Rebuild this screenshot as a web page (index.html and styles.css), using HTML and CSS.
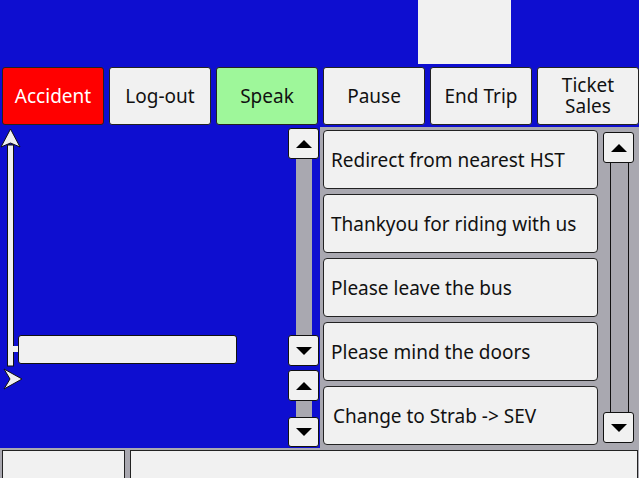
FILE: index.html
```html
<!DOCTYPE html>
<html>
<head>
<meta charset="utf-8">
<link rel="stylesheet" href="styles.css">
</head>
<body>
<div class="screen">
  <div class="top"><div class="top-box"></div></div>
  <div class="actions">
    <button class="btn btn-red">Accident</button>
    <button class="btn">Log-out</button>
    <button class="btn btn-green">Speak</button>
    <button class="btn">Pause</button>
    <button class="btn">End Trip</button>
    <button class="btn btn-two">Ticket<br>Sales</button>
  </div>
  <div class="main">
    <div class="canvas">
      <svg class="axes" width="40" height="270" viewBox="0 125 40 270">
        <rect x="7.5" y="145" width="6" height="221" fill="#f0f0f0" stroke="#111" stroke-width="1"/>
        <polygon points="10.5,129 20,147 10.5,143 1,147" fill="#f0f0f0" stroke="#111" stroke-width="1" stroke-linejoin="miter"/>
        <rect x="13" y="346" width="6" height="6" fill="#f0f0f0"/>
        <polygon points="4,369 22,379 4,389 10,379" fill="#f0f0f0" stroke="#111" stroke-width="1"/>
      </svg>
      <div class="field"></div>
    </div>
    <div class="mid">
      <div class="sbtn"><svg width="16" height="8" viewBox="0 0 16 8"><polygon points="0,8 8,0 16,8" fill="#000"/></svg></div>
      <div class="mtrack mtrack-long"></div>
      <div class="sbtn"><svg width="16" height="8" viewBox="0 0 16 8"><polygon points="0,0 16,0 8,8" fill="#000"/></svg></div>
      <div class="sbtn sbtn-gap"><svg width="16" height="8" viewBox="0 0 16 8"><polygon points="0,8 8,0 16,8" fill="#000"/></svg></div>
      <div class="mtrack mtrack-short"></div>
      <div class="sbtn sbtn-last"><svg width="16" height="8" viewBox="0 0 16 8"><polygon points="0,0 16,0 8,8" fill="#000"/></svg></div>
    </div>
    <div class="panel">
      <div class="list">
        <div class="item">Redirect from nearest HST</div>
        <div class="item">Thankyou for riding with us</div>
        <div class="item">Please leave the bus</div>
        <div class="item">Please mind the doors</div>
        <div class="item item-last">Change to Strab -&gt; SEV</div>
      </div>
      <div class="vscroll">
        <div class="sbtn"><svg width="16" height="8" viewBox="0 0 16 8"><polygon points="0,8 8,0 16,8" fill="#000"/></svg></div>
        <div class="vtrack"></div>
        <div class="sbtn"><svg width="16" height="8" viewBox="0 0 16 8"><polygon points="0,0 16,0 8,8" fill="#000"/></svg></div>
      </div>
    </div>
  </div>
  <div class="status">
    <div class="cell cell-small"></div>
    <div class="cell cell-wide"></div>
  </div>
</div>
</body>
</html>
```
FILE: styles.css
```css
html, body {
  margin: 0;
  padding: 0;
  width: 639px;
  height: 478px;
  overflow: hidden;
  background: #0e0ed0;
  font-family: "Noto Sans", "Open Sans", sans-serif;
}

.screen {
  width: 639px;
  height: 478px;
  display: flex;
  flex-direction: column;
  overflow: hidden;
}

.top {
  height: 67px;
  padding-left: 418px;
  box-sizing: border-box;
  flex: none;
}

.top-box {
  width: 93px;
  height: 64px;
  background: #f1f1f1;
}

.actions {
  display: flex;
  gap: 5px;
  padding-left: 2px;
  height: 58px;
  flex: none;
}

.btn {
  width: 102px;
  height: 58px;
  box-sizing: border-box;
  margin: 0;
  padding: 0;
  border: 1px solid #222;
  border-radius: 3px;
  background: #f1f1f1;
  color: #111;
  font-family: inherit;
  font-size: 19px;
  line-height: 20px;
}

.btn-two {
  font-size: 19px;
  line-height: 21px;
}

.btn-red {
  background: #ff0000;
  color: #fff;
}

.btn-green {
  background: #9ef79a;
}

.main {
  display: flex;
  height: 323px;
  flex: none;
}

.canvas {
  position: relative;
  width: 288px;
  flex: none;
}

.axes {
  position: absolute;
  left: 0;
  top: 0;
}

.field {
  position: absolute;
  left: 18px;
  top: 210px;
  width: 219px;
  height: 29px;
  box-sizing: border-box;
  background: #f1f1f1;
  border: 1px solid #111;
  border-radius: 3px;
}

.mid {
  width: 32px;
  flex: none;
  display: flex;
  flex-direction: column;
  padding-top: 3px;
  box-sizing: border-box;
}

.sbtn {
  width: 31px;
  height: 31px;
  box-sizing: border-box;
  border: 1px solid #111;
  border-radius: 3px;
  background: #f1f1f1;
  display: flex;
  align-items: center;
  justify-content: center;
  flex: none;
}

.sbtn-gap {
  margin-top: 4px;
}

.sbtn-last {
  height: 30px;
}

.mtrack {
  width: 16px;
  margin-left: 8px;
  background: #a9a8b0;
  flex: none;
}

.mtrack-long {
  height: 176px;
}

.mtrack-short {
  height: 16px;
}

.panel {
  margin-top: 2px;
  width: 319px;
  flex: none;
  background: #a9a8b0;
  display: flex;
  padding: 3px 5px 3px 3px;
  box-sizing: border-box;
  gap: 5px;
}

.list {
  width: 275px;
  display: flex;
  flex-direction: column;
  gap: 5px;
}

.item {
  height: 59px;
  box-sizing: border-box;
  border: 1px solid #222;
  border-radius: 4px;
  background: #f1f1f1;
  display: flex;
  align-items: center;
  padding-left: 7px;
  font-size: 19px;
  color: #111;
  white-space: nowrap;
}

.item-last {
  padding-left: 9px;
}

.vscroll {
  width: 31px;
  display: flex;
  flex-direction: column;
  margin: 2px 0;
}

.vtrack {
  flex: 1;
  width: 19px;
  margin-left: 7px;
  box-sizing: border-box;
  border-left: 1px solid #111;
  border-right: 1px solid #111;
  background: #a9a8b0;
}

.status {
  flex: 1;
  background: #a9a8b0;
  display: flex;
  gap: 5px;
  padding: 2px 1px 0 2px;
}

.cell {
  height: 32px;
  box-sizing: border-box;
  background: #f1f1f1;
  border: 1px solid #222;
}

.cell-small {
  width: 123px;
}

.cell-wide {
  flex: 1;
}
```
